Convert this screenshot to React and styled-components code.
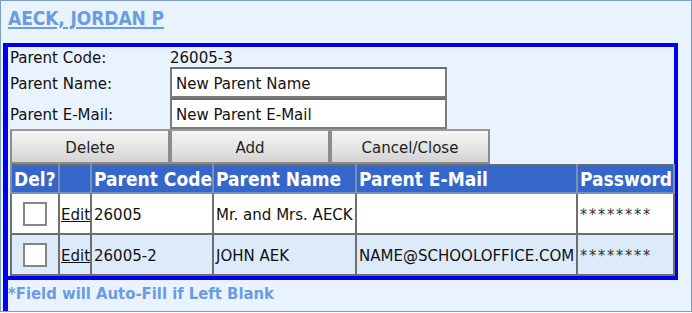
import React from 'react';
import styled, { createGlobalStyle } from 'styled-components';

const GlobalStyle = createGlobalStyle`
  html, body {
    margin: 0;
    padding: 0;
    background: #ffffff;
  }
  body {
    font-family: "DejaVu Sans Condensed", "DejaVu Sans", "Liberation Sans", sans-serif;
  }
`

const parents = [
  { code: '26005', name: 'Mr. and Mrs. AECK', email: '', password: '********' },
  { code: '26005-2', name: 'JOHN AEK', email: 'NAME@SCHOOLOFFICE.COM', password: '********' },
];

const App = () => {
  return (
    <>
      <GlobalStyle />
      <Frame>
        <TitleBar>
          <Title href="#">AECK, JORDAN P</Title>
        </TitleBar>
        <Panel>
          <Box>
            <FormRow $height={20}>
              <Label>Parent Code:</Label>
              <Value>26005-3</Value>
            </FormRow>
            <FormRow $height={31}>
              <Label>Parent Name:</Label>
              <TextInput defaultValue="New Parent Name" />
            </FormRow>
            <FormRow $height={31}>
              <Label>Parent E-Mail:</Label>
              <TextInput defaultValue="New Parent E-Mail" />
            </FormRow>
            <ButtonRow>
              <Button>Delete</Button>
              <Button>Add</Button>
              <Button>Cancel/Close</Button>
            </ButtonRow>
            <Grid>
              <colgroup>
                <col style={{ width: 48 }} />
                <col style={{ width: 32 }} />
                <col style={{ width: 122 }} />
                <col style={{ width: 143 }} />
                <col style={{ width: 221 }} />
                <col style={{ width: 97 }} />
              </colgroup>
              <thead>
                <tr>
                  <Th>Del?</Th>
                  <Th></Th>
                  <Th>Parent Code</Th>
                  <Th>Parent Name</Th>
                  <Th>Parent E-Mail</Th>
                  <Th>Password</Th>
                </tr>
              </thead>
              <tbody>
                {parents.map((p, i) => (
                  <Row key={p.code} $alt={i % 2 === 1}>
                    <Td $center><Check type="checkbox" /></Td>
                    <Td $tight><EditLink href="#">Edit</EditLink></Td>
                    <Td>{p.code}</Td>
                    <Td>{p.name}</Td>
                    <Td>{p.email}</Td>
                    <Td><Stars>{p.password}</Stars></Td>
                  </Row>
                ))}
              </tbody>
            </Grid>
          </Box>
          <Note>*Field will Auto-Fill if Left Blank</Note>
        </Panel>
      </Frame>
    </>
  );
}

export default App;

const Frame = styled.div`
  width: 692px;
  height: 312px;
  box-sizing: border-box;
  border: 1px solid #7f9fc2;
  background: #e9f3fd;
  overflow: hidden;
`
const TitleBar = styled.div`
  height: 42px;
  padding: 6px 0 0 7px;
  box-sizing: border-box;
`
const Title = styled.a`
  font-size: 19px;
  font-weight: bold;
  color: #6b9ce2;
  text-decoration: underline;
  text-decoration-thickness: 2px;
  text-underline-offset: 2px;
  letter-spacing: -0.1px;
`
const Panel = styled.div`
  margin-left: 2px;
  border-left: 5px solid #0000f0;
  display: flex;
  flex-direction: column;
  height: 268px;
`
const Box = styled.div`
  width: 670px;
  box-sizing: border-box;
  border: 4px solid #0000f0;
  border-left: none;
  padding: 0 0 0 2px;
`
const FormRow = styled.div`
  display: flex;
  align-items: center;
  height: ${p => p.$height}px;
`
const Label = styled.div`
  width: 160px;
  font-size: 16.7px;
  color: #111;
`
const Value = styled.div`
  font-size: 16.7px;
  color: #111;
`
const TextInput = styled.input`
  width: 277px;
  height: 31px;
  box-sizing: border-box;
  border: 2px solid #7b7b7b;
  border-top-color: #6e6e6e;
  background: #ffffff;
  padding: 0 4px;
  margin: 0;
  font-family: inherit;
  font-size: 16.7px;
  color: #111;
  outline: none;
`
const ButtonRow = styled.div`
  display: flex;
  height: 35px;
`
const Button = styled.button`
  width: 160px;
  height: 35px;
  box-sizing: border-box;
  border: 2px solid #8c8c8c;
  border-top-color: #9a9a9a;
  background: linear-gradient(#f5f5f5, #e4e4e4 55%, #d2d2d2);
  font-family: inherit;
  font-size: 16.7px;
  color: #222;
  margin: 0;
  padding: 0;
`
const Grid = styled.table`
  width: 663px;
  border-collapse: collapse;
  table-layout: fixed;
  border: 2px solid #6a6a6a;
`
const Th = styled.th`
  height: 26px;
  padding: 0 2px;
  background: #3467c9;
  color: #ffffff;
  font-size: 19px;
  font-weight: bold;
  text-align: left;
  white-space: nowrap;
  overflow: hidden;
  border: 2px solid #7d8fb5;
  border-top: none;
`
const Row = styled.tr`
  background: ${p => (p.$alt ? '#dceaf9' : '#ffffff')};
`
const Td = styled.td`
  height: 39px;
  padding: ${p => (p.$tight ? '0 0 0 1px' : '0 2px')};
  text-align: ${p => (p.$center ? 'center' : 'left')};
  font-size: 16.7px;
  color: #111;
  white-space: nowrap;
  overflow: hidden;
  border: 2px solid #6f6f6f;
`
const Check = styled.input`
  appearance: none;
  width: 24px;
  height: 24px;
  margin: 0;
  box-sizing: border-box;
  border: 2px solid #858585;
  background: #ffffff;
  vertical-align: middle;
`
const EditLink = styled.a`
  color: #111;
  text-decoration: underline;
`
const Stars = styled.span`
  font-size: 16px;
  color: #333;
  letter-spacing: 1.8px;
`
const Note = styled.div`
  padding: 4px 0 0 0;
  font-size: 16.5px;
  font-weight: bold;
  color: #6b9ce2;
`
